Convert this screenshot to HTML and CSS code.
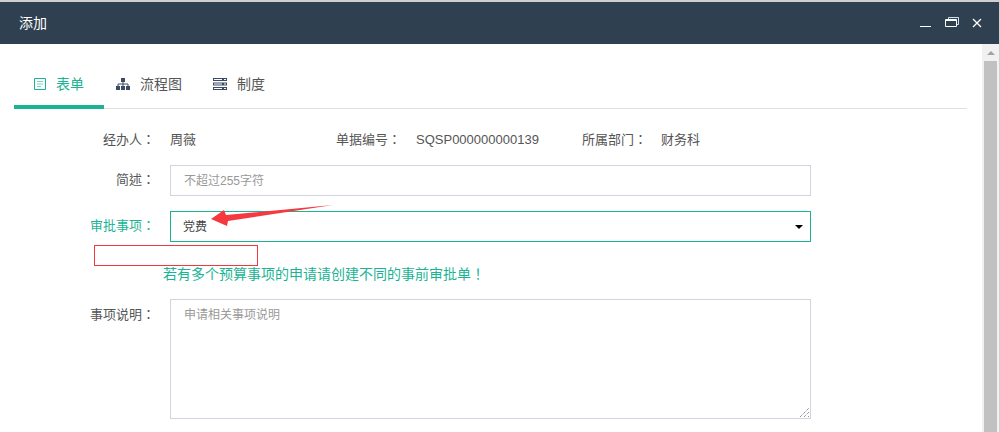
FILE: index.html
```html
<!DOCTYPE html>
<html>
<head>
<meta charset="utf-8">
<title>添加</title>
<link rel="stylesheet" href="styles.css">
</head>
<body>
<div class="dialog">
  <header class="titlebar">
    <span class="title">添加</span>
    <div class="win-btns">
      <svg class="win-icon" width="12" height="12" viewBox="0 0 12 12"><path d="M0 9.500H11" stroke="#fff" fill="none"/></svg>
      <svg class="win-icon" width="14" height="12" viewBox="0 0 14 12"><path d="M3.500 2.500V.5H13.500V7.500H11.500" stroke="#cfe3f2" fill="none"/><path d="M.5 2.500H11.500V9.500H.5Z" stroke="#fff" fill="none"/><path d="M1 3.500H11" stroke="#fff" fill="none"/></svg>
      <svg class="win-icon" width="10" height="10" viewBox="0 0 10 10"><path d="M1 1L9 9M9 1L1 9" stroke="#fff" stroke-width="1.300" fill="none"/></svg>
    </div>
  </header>
  <div class="body">
    <main class="content">
      <nav class="tabs">
        <a class="tab tab-active">
          <svg width="12" height="12" viewBox="0 0 12 12"><path d="M.5.5H11.500V11.500H.5Z" stroke="#1ab394" fill="none"/><path d="M3 3.500H9M3 6H9M3 8.500H7" stroke="#1ab394" stroke-opacity=".6" fill="none"/></svg>
          <span>表单</span>
        </a>
        <a class="tab tab-flow">
          <svg width="14" height="12" viewBox="0 0 14 12"><path d="M5 0H9V4H5ZM0 8H4V12H0ZM5 8H9V12H5ZM10 8H14V12H10Z" fill="#3d4a66"/><path d="M7 4V8M2 8V6H12V8" stroke="#3d4a66" fill="none"/></svg>
          <span>流程图</span>
        </a>
        <a class="tab tab-rule">
          <svg width="14" height="12" viewBox="0 0 14 12"><path d="M0 0H14V3H0ZM0 4.500H14V7.500H0ZM0 9H14V12H0Z" fill="#3d4a66"/><path d="M1 1.500H9M11 1.500H13M1 6H9M11 6H13M1 10.500H9M11 10.500H13" stroke="#fff" fill="none"/></svg>
          <span>制度</span>
        </a>
      </nav>
      <div class="info-row">
        <span class="label">经办人：</span><span class="val-name">周薇</span>
        <span class="info-label">单据编号：</span><span class="val-no">SQSP000000000139</span>
        <span class="info-label">所属部门：</span><span class="val-dept">财务科</span>
      </div>
      <div class="row row-brief">
        <span class="label">简述：</span>
        <div class="field input"><span class="placeholder">不超过255字符</span></div>
      </div>
      <div class="row row-item">
        <span class="label label-active">审批事项：</span>
        <div class="field select"><span class="select-text">党费</span><i class="caret"></i></div>
      </div>
      <div class="error-box"></div>
      <p class="hint">若有多个预算事项的申请请创建不同的事前审批单！</p>
      <div class="row row-desc">
        <span class="label">事项说明：</span>
        <div class="field area"><span class="placeholder">申请相关事项说明</span>
          <svg class="grip" width="9" height="9" viewBox="0 0 9 9"><path d="M0 9L9 0M4 9L9 4M8 9L9 8" stroke="#666" stroke-dasharray="1 1" fill="none"/></svg>
        </div>
      </div>
    </main>
    <div class="scrollbar">
      <div class="scroll-up"><i class="scroll-arrow"></i></div>
      <div class="scroll-thumb"></div>
    </div>
  </div>
  <svg class="annotation" width="124" height="24" viewBox="0 0 124 24"><path d="M1 15L14 6L16 11L123 1L18 17L17 22Z" fill="#f5393f"/></svg>
</div>
</body>
</html>
```
FILE: styles.css
```css
* { box-sizing: border-box; }
html, body { margin: 0; height: 432px; overflow: hidden; background: #fff; }
body {
  font-family: "Liberation Sans", "Noto Sans CJK TC", sans-serif;
  font-size: 13px;
  color: #555;
  padding-top: 2px;
  background: #d0d0d0;
}
.dialog { position: relative; height: 430px; margin-right: 1px; background: #fff; display: flex; flex-direction: column; }
.titlebar {
  height: 42px;
  flex: none;
  background: #2f4050;
  color: #fff;
  display: flex;
  align-items: center;
  justify-content: space-between;
  padding: 0 17px 0 19px;
}
.title { font-size: 14px; line-height: 18px; padding-bottom: 1px; }
.win-btns { display: flex; align-items: center; gap: 13px; }
.win-icon { display: block; }
.body { flex: 1; display: flex; min-height: 0; }
.content { flex: 1; min-width: 0; padding: 0 15px 0 14px; }
.tabs { height: 65px; border-bottom: 1px solid #e0e0e0; display: flex; align-items: flex-start; padding-top: 29px; color: #555; font-size: 14px; }
.tab { display: flex; align-items: center; height: 36px; padding-bottom: 15px; }
.tab span { line-height: 20px; }
.tab-active { width: 90px; padding-left: 20px; gap: 10px; color: #1ab394; border-bottom: 4px solid #1ab394; padding-bottom: 11px; }
.tab-flow { margin-left: 12px; gap: 10px; }
.tab-rule { margin-left: 31px; gap: 10px; }
.info-row { display: flex; align-items: center; height: 18px; margin-top: 22px; line-height: 18px; }
.label { width: 141px; text-align: right; flex: none; line-height: 18px; padding-bottom: 1px; }
.label-active { color: #1ab394; }
.val-name { margin-left: 15px; width: 166px; flex: none; }
.info-label { flex: none; }
.val-no { margin-left: 15px; width: 166px; flex: none; }
.val-dept { margin-left: 14px; }
.info-row .label { padding-bottom: 0; }
.row { display: flex; align-items: center; }
.label + .field { margin-left: 15px; }
.field { width: 641px; border: 1px solid #d0d4de; background: #fff; flex: none; position: relative; }
.row-brief { margin-top: 16px; }
.input { height: 31px; line-height: 29px; padding-left: 13px; }
.placeholder { color: #999; font-size: 12px; }
.row-item { margin-top: 15px; }
.select { height: 31px; border-color: #1ab394; display: flex; align-items: center; justify-content: space-between; padding: 0 7px 0 12px; color: #444; font-size: 12px; }
.select-text { line-height: 16px; }
.caret { width: 0; height: 0; border: 4px solid transparent; border-top-color: #000; border-bottom: 0; }
.error-box { width: 164px; height: 21px; margin: 3px 0 0 80px; border: 1px solid #f0383e; }
.hint { margin: 0 0 0 149px; color: #1ab394; font-size: 14px; line-height: 17px; }
.row-desc { margin-top: 16px; align-items: flex-start; }
.row-desc .label { line-height: 32px; padding-bottom: 0; }
.area { height: 120px; padding: 4px 13px; line-height: 22px; }
.grip { position: absolute; right: 1px; bottom: 1px; }
.scrollbar { width: 17px; flex: none; background: #f1f1f1; padding: 0 2px; }
.scroll-up { height: 17px; margin: 0 -2px; display: flex; align-items: center; justify-content: center; }
.scroll-arrow { width: 0; height: 0; border: 4px solid transparent; border-top: 0; border-bottom: 4px solid #a3a3a3; }
.scroll-thumb { height: 372px; background: #c1c1c1; }
.annotation { position: absolute; left: 210px; top: 202px; }
```
